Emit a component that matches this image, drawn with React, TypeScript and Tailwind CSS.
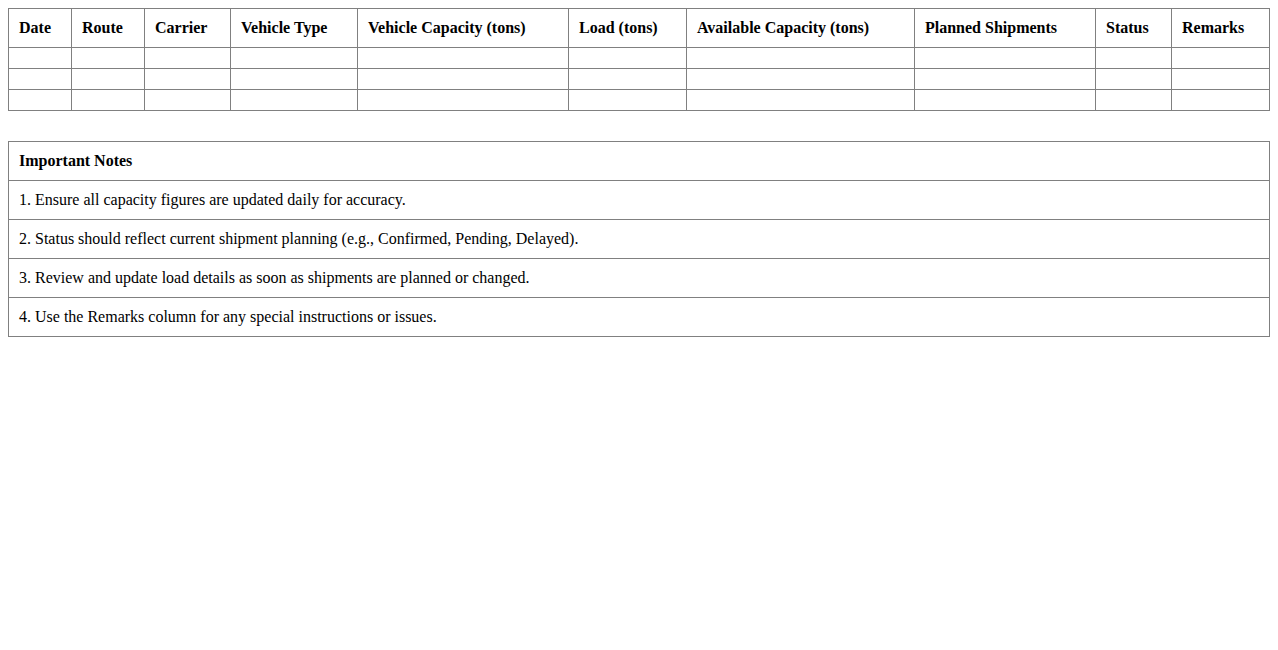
import React from "react";

const cols: [string, number][] = [
  ["Date", 63],
  ["Route", 73],
  ["Carrier", 86],
  ["Vehicle Type", 127],
  ["Vehicle Capacity (tons)", 211],
  ["Load (tons)", 118],
  ["Available Capacity (tons)", 228],
  ["Planned Shipments", 181],
  ["Status", 76],
  ["Remarks", 98],
];

const notes = [
  "1. Ensure all capacity figures are updated daily for accuracy.",
  "2. Status should reflect current shipment planning (e.g., Confirmed, Pending, Delayed).",
  "3. Review and update load details as soon as shipments are planned or changed.",
  "4. Use the Remarks column for any special instructions or issues.",
];

export default function App() {
  return (
    <div className="min-h-[650px] bg-white p-2 text-black text-[16px] leading-[18px] [font-family:'Liberation_Serif',serif]">
      <table className="w-full table-fixed border-collapse border border-[#808080]">
        <colgroup>
          {cols.map(([n, w]) => (
            <col key={n} style={{ width: w }} />
          ))}
        </colgroup>
        <thead>
          <tr>
            {cols.map(([n]) => (
              <th key={n} className="border border-[#808080] p-[10px] text-left font-bold">
                {n}
              </th>
            ))}
          </tr>
        </thead>
        <tbody>
          {[0, 1, 2].map((r) => (
            <tr key={r}>
              {cols.map(([n]) => (
                <td key={n} className="h-[21px] border border-[#808080] p-[10px]"></td>
              ))}
            </tr>
          ))}
        </tbody>
      </table>
      <table className="mt-[30px] w-full border-collapse border border-[#808080]">
        <tbody>
          <tr>
            <td className="border border-[#808080] p-[10px] font-bold">Important Notes</td>
          </tr>
          {notes.map((n) => (
            <tr key={n}>
              <td className="border border-[#808080] p-[10px]">{n}</td>
            </tr>
          ))}
        </tbody>
      </table>
    </div>
  );
}
